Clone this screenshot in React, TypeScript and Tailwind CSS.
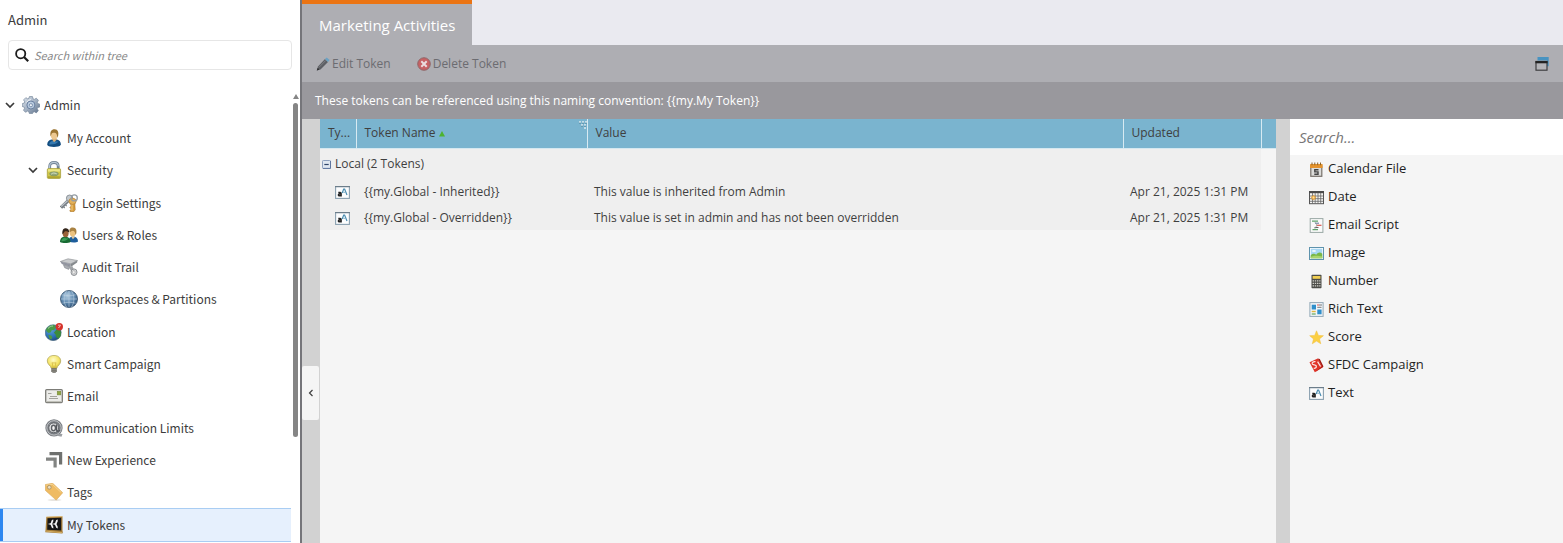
import React, { useState } from 'react';
import clsx from 'clsx';

type IconProps = { className?: string };
type Icon = React.FC<IconProps>;

const GearIcon: Icon = ({ className }) => (
    <svg viewBox="0 0 18 18" className={className} aria-hidden="true">
        <defs>
            <linearGradient id="gear" x1="0" y1="0" x2="1" y2="1">
                <stop offset="0" stopColor="#dfe6ee" />
                <stop offset=".5" stopColor="#a3b1c3" />
                <stop offset="1" stopColor="#5d7089" />
            </linearGradient>
        </defs>
        <path d="M7.4.6h3.1l.5 2.2 1.3.6 2-1.2 2.1 2.1-1.1 2 .5 1.3 2 .6v2.7l-2.1.6-.5 1.2 1.1 2-2 2.2-2-1.2-1.3.6-.5 1.3H7.4l-.6-1.9-1.3-.6-2 1.2-2-2.1 1.1-2-.5-1.2-1.9-.5V7.7l2-.6.5-1.3-1.1-1.9 2.2-2.2 1.9 1.1 1.2-.5z" fill="url(#gear)" stroke="#74859a" strokeWidth=".7" />
        <circle cx="8.9" cy="9" r="4" fill="#b9cbe0" stroke="#6a80a0" strokeWidth="1" />
        <circle cx="8.9" cy="9.2" r="1.6" fill="#eef3f8" stroke="#6a80a0" strokeWidth=".8" />
        <path d="M4.5 6.5A5.2 5.2 0 0 1 9 3.6" fill="none" stroke="#f5f8fb" strokeWidth=".9" />
    </svg>
);

const PersonIcon: Icon = ({ className }) => (
    <svg viewBox="0 0 18 18" className={className} aria-hidden="true">
        <path d="M2.200 16c0-3.400 1.600-5 4.600-5.500l4.400-.2c3.200.8 4.700 2.300 4.700 5.500-1.300 1.900-4 2.100-7 2.100-3 0-5.500-.3-6.700-1.900z" fill="#134d80" />
        <path d="M4 15.500c1-2.500 2-3.500 4.500-3.700 2 .8 3.500 1 5 .2-1 2.700-4.500 3.700-9.500 3.500z" fill="#3579b0" />
        <path d="m7 10.200 2 3 3-2.700-.8-2.200H7.200z" fill="#d9ae78" />
        <ellipse cx="9" cy="6" rx="3.200" ry="4.400" fill="#edc890" />
        <path d="M5.600 7.500C4.500 2.300 6.800.1 9.800.3c3 .3 4.200 2.800 3.300 6.600l-1.100 2c.3-2.300 0-4.300-1.500-5-1-.3-2-.2-3.200.2-1 .6-.7 1.800-1.700 3.400z" fill="#9b7431" />
    </svg>
);

const LockIcon: Icon = ({ className }) => (
    <svg viewBox="0 0 18 18" className={className} aria-hidden="true">
        <path d="M4.700 9V5.200C4.700 2.700 6.500 1.500 9 1.500s4.200 1.300 4.200 3.800V9" fill="none" stroke="#6f8193" strokeWidth="2.800" />
        <path d="M4.600 8.500V5.200C4.600 2.800 6.400 1.400 9 1.400s4.300 1.400 4.300 3.800" fill="none" stroke="#b7c6d4" strokeWidth="1.200" />
        <rect x="2.300" y="7.600" width="13.300" height="9.900" rx="1.200" fill="#cfc748" stroke="#a29a35" strokeWidth=".7" />
        <rect x="3" y="8.200" width="11.900" height="2.400" fill="#ece684" />
        <rect x="3" y="15.300" width="11.900" height="1.700" fill="#aea42f" />
        <ellipse cx="9" cy="12.800" rx="4.400" ry="2" fill="#93a878" stroke="#6e8560" strokeWidth=".5" />
        <path d="M6.200 13.200c1.400-1.500 3.300-1.500 5.500-.4" fill="none" stroke="#e6ecd4" strokeWidth=".8" />
    </svg>
);

const KeysIcon: Icon = ({ className }) => (
    <svg viewBox="0 0 18 18" className={className} aria-hidden="true">
        <path d="M9.500 5.500 1 13.500" stroke="#747b82" strokeWidth="3.200" />
        <path d="M9.500 5 1.200 12.500" stroke="#bac0c6" strokeWidth="1.200" />
        <path d="m3 12 1.700 2M5 10.200l1.600 1.900" stroke="#7c838a" strokeWidth="1.200" />
        <circle cx="9.600" cy="4.200" r="3.200" fill="#c3c8cc" stroke="#868d94" strokeWidth=".9" />
        <path d="m10.200 7.500 4.500.6.500 7.700-1.500 2h-3.200l-.7-1.400 1.500-1.200-1.400-1.700 1.200-1.400z" fill="#d89d3d" stroke="#a36f25" strokeWidth=".6" />
        <path d="M12 8.500v8" stroke="#f4cf83" strokeWidth="1" />
        <ellipse cx="12.500" cy="7.300" rx="3.600" ry="3.100" fill="#e3b058" stroke="#a9752b" strokeWidth=".6" />
        <circle cx="14.300" cy="3.900" r="3" fill="none" stroke="#959da4" strokeWidth="1.300" />
    </svg>
);

const UsersIcon: Icon = ({ className }) => (
    <svg viewBox="0 0 18 18" className={className} aria-hidden="true">
        <path d="M8.500 15.500c.2-3.200 1.700-4.600 4-4.900 3.500 0 5.500 1.600 5.500 4.900-1.800 1.300-5.700 1.500-9.500 0z" fill="#1d5d9b" />
        <path d="m11.200 10.500 1.700 2.800 2.200-2.500z" fill="#e9c898" />
        <ellipse cx="12.600" cy="6.500" rx="3" ry="4" fill="#ecc27f" />
        <path d="M9.600 6.500c-.7-3.800 1-5.200 3.400-5 2.900.2 4 2.500 3.300 6l-1 1.500c.1-2.200-.5-4.100-2.300-4.300-1.500.2-1.900.7-3.400 1.800z" fill="#a98242" />
        <path d="M0 16c0-3.800 2-5.300 4.700-5.600 3.500 0 5.800 2.100 5.800 5.600-2 1.400-8.200 1.500-10.500 0z" fill="#186b33" />
        <path d="M1.300 15.200c.6-2.200 1.700-3.200 3.200-3.400 1.700.8 3 .7 4 .3-.8 2-3.500 3.200-7.200 3.100z" fill="#3b9a57" />
        <ellipse cx="5.600" cy="7.300" rx="3" ry="3.900" fill="#9a6238" />
        <path d="M2.600 8.300C1.800 4.200 3.400 2.100 6 2.300c2.300.2 3.400 1.900 3 4.300-1.200-1.200-2.300-1.500-3.900-1.300-1 .7-1.100 1.400-2.500 3z" fill="#33251b" />
    </svg>
);

const CameraIcon: Icon = ({ className }) => (
    <svg viewBox="0 0 18 18" className={className} aria-hidden="true">
        <path d="M.3 3.500 8 .8l9.500 1.700-6.800 3.400z" fill="#c9cbcd" stroke="#8a8d90" strokeWidth=".6" />
        <path d="m.3 3.500 10.400 2.400-.3 2.800L1.800 6z" fill="#9295a0" />
        <path d="m10.700 5.900 6.800-3.400-.4 1.900-5 3.500-1.700.8z" fill="#85898d" />
        <path d="m3.300 6.600 6.600 2-1.200 2.800-4-1.600z" fill="#a9acb2" stroke="#767a80" strokeWidth=".5" />
        <path d="m8.700 9 3.600-.9 2 4.100-2.700 1.800z" fill="#a0a3a7" />
        <ellipse cx="14" cy="14.200" rx="3" ry="3.300" fill="#d3d5d7" stroke="#85888c" strokeWidth=".9" />
        <ellipse cx="13.800" cy="14.200" rx="1.300" ry="1.700" fill="#f1f1f1" stroke="#999" strokeWidth=".5" />
    </svg>
);

const GlobeIcon: Icon = ({ className }) => (
    <svg viewBox="0 0 18 18" className={className} aria-hidden="true">
        <defs>
            <radialGradient id="globe" cx=".4" cy=".3" r=".75">
                <stop offset="0" stopColor="#b3cce0" />
                <stop offset=".5" stopColor="#6690b5" />
                <stop offset="1" stopColor="#2c5075" />
            </radialGradient>
        </defs>
        <circle cx="9" cy="9" r="8.500" fill="url(#globe)" stroke="#3f5a75" strokeWidth=".9" />
        <path d="M9 .8v16.400M1 9h16M2.500 4.800c4 1.200 9 1.200 13 0M2.500 13.200c4-1.200 9-1.200 13 0M6.500 1C3.300 5.500 3.300 12.500 6.500 17M11.500 1c3.200 4.500 3.200 11.500 0 16" fill="none" stroke="#bdd2e2" strokeWidth=".6" />
    </svg>
);

const LocationIcon: Icon = ({ className }) => (
    <svg viewBox="0 0 18 18" className={className} aria-hidden="true">
        <defs>
            <radialGradient id="earth" cx=".35" cy=".3" r=".8">
                <stop offset="0" stopColor="#5ea3da" />
                <stop offset=".6" stopColor="#2b6fb5" />
                <stop offset="1" stopColor="#1f4070" />
            </radialGradient>
        </defs>
        <circle cx="8.200" cy="9.700" r="8" fill="url(#earth)" stroke="#4d6b7e" strokeWidth=".6" />
        <path d="M1 6.500C3 3 6 1.500 9.500 2l1.700 2.400-2 2.700-2.500.2-.8 2L3.500 10 1.700 8.500z" fill="#4a9a49" />
        <path d="m11.300 6.700 3.200-.5 1.500 2.700-.3 4-2.400 2.900-2.200-1.900-.5-2.500-1.700-1.700z" fill="#3c8c3c" />
        <path d="m3.200 11.700 2.900.9 1.200 1.500-1 2.500-1.800-.9z" fill="#4d9a44" />
        <path d="M3 5.500C4.500 3.800 6 3 8 3" stroke="#a6d19c" fill="none" />
        <circle cx="14.300" cy="3.700" r="3.700" fill="#d5322b" />
        <path d="M13 2.200h2.700M15.500 2.500l-2 2.500" stroke="#f7bdb7" strokeWidth="1" fill="none" />
    </svg>
);

const BulbIcon: Icon = ({ className }) => (
    <svg viewBox="0 0 18 18" className={className} aria-hidden="true">
        <defs>
            <radialGradient id="bulb" cx=".45" cy=".35" r=".7">
                <stop offset="0" stopColor="#fffcc9" />
                <stop offset=".6" stopColor="#f5e466" />
                <stop offset="1" stopColor="#cbb535" />
            </radialGradient>
        </defs>
        <path d="M6.200 13.200C6 10.700 2.300 9.500 2.300 6 2.300 2.600 5.300.4 9 .4s6.700 2.200 6.700 5.600c0 3.500-3.600 4.700-3.800 7.200z" fill="url(#bulb)" stroke="#b3a862" strokeWidth=".8" />
        <path d="m7 7.500 1.200 5M11 7.500l-1.200 5M7 7.500l1 .8 1-.8 1 .8 1-.8" stroke="#cdae35" strokeWidth=".6" fill="none" />
        <path d="M6.300 13.200h5.500v3l-1.300 1.600H7.700l-1.400-1.600z" fill="#64625a" />
        <path d="M6.300 14.700h5.500M6.500 16.200h5" stroke="#b4b2a8" strokeWidth=".6" />
    </svg>
);

const EmailIcon: Icon = ({ className }) => (
    <svg viewBox="0 0 18 18" className={className} aria-hidden="true">
        <rect x=".7" y="2.600" width="16.600" height="13" rx="1" fill="#ecece9" stroke="#7c7c77" strokeWidth="1.300" />
        <path d="M1.500 14.600h15" stroke="#bdbdb6" />
        <rect x="12.200" y="4.300" width="3.600" height="3.600" fill="#8fa63f" stroke="#6f8137" strokeWidth=".5" />
        <path d="M3 6.500h3.500M5 9.500h7M4 11.500h9" stroke="#a2a29c" strokeWidth="1" />
    </svg>
);

const AtIcon: Icon = ({ className }) => (
    <svg viewBox="0 0 18 18" className={className} aria-hidden="true">
        <circle cx="9" cy="8.900" r="8.600" fill="#777b80" />
        <circle cx="9" cy="8.900" r="7.200" fill="none" stroke="#c3c5c8" strokeWidth="1" />
        <circle cx="8.700" cy="8.800" r="4.900" fill="#e2e3e4" stroke="#64676c" strokeWidth="1" />
        <ellipse cx="8.500" cy="9" rx="2" ry="2.700" fill="#f5f5f5" stroke="#5d6065" strokeWidth="1.400" />
        <path d="M11.500 5.500v5.200c.2 1.900 2.300 2.100 3.300.3" fill="none" stroke="#53565b" strokeWidth="1.400" />
        <path d="m12 14.500 5.500.5-1 2.700-4.500-1z" fill="#9b9ea2" />
    </svg>
);

const ExperienceIcon: Icon = ({ className }) => (
    <svg viewBox="0 0 18 18" className={className} aria-hidden="true">
        <path d="M4.500 2.700h11.100v10.800" fill="none" stroke="#6f716f" strokeWidth="3.200" />
        <path d="M1 8.200h9.100v8.300" fill="none" stroke="#828482" strokeWidth="3.200" />
    </svg>
);

const TagIcon: Icon = ({ className }) => (
    <svg viewBox="0 0 18 18" className={className} aria-hidden="true">
        <ellipse cx="9.500" cy="17" rx="7" ry=".8" fill="#dfdcd6" />
        <path d="M.4 1.500 7.700.3l10 9.400-6.500 7.400L.5 7.500z" fill="#efbb63" stroke="#d9a654" strokeWidth=".6" />
        <path d="m1.300 2.300 6-1 9 8.300" fill="none" stroke="#f8d99b" strokeWidth=".8" />
        <circle cx="4.300" cy="4.300" r="1.900" fill="#e9dcc1" stroke="#aa9161" strokeWidth=".9" />
    </svg>
);

const TokensIcon: Icon = ({ className }) => (
    <svg viewBox="0 0 18 18" className={className} aria-hidden="true">
        <path d="M1.300 1 17.500.4v15.300l.5-.2-.5 2.100L.2 16.200l.3-1.600z" fill="#a67c37" />
        <path d="m2.500 2.300 13.700-.5v12.700L2.200 13.700z" fill="#161616" />
        <path d="M1.300 1 17.500.4" stroke="#ddb870" strokeWidth=".8" />
        <path d="M.5 15 17 16.700" stroke="#d9b46a" strokeWidth=".9" />
        <path d="M8.300 4.500c-2 0-.6 2.800-2.600 3.500 2 .6.600 3.500 2.600 3.500M12.700 4.500c-2 0-.6 2.800-2.600 3.500 2 .6.600 3.500 2.600 3.500" fill="none" stroke="#f5f5f5" strokeWidth="1.800" />
    </svg>
);

const CalendarFileIcon: Icon = ({ className }) => (
    <svg viewBox="0 0 15 15" className={className} aria-hidden="true">
        <rect x="1.800" y="4" width="11" height="10.300" fill="#dcdcda" stroke="#77716a" strokeWidth="1.200" />
        <rect x="1" y="2" width="12.600" height="4" rx=".6" fill="#e5932c" />
        <path d="M3 .5v2.700M5.800.5v2.700M8.700.5v2.700M11.500.5v2.700" stroke="#8a6228" strokeWidth="1" />
        <path d="M9.500 7.700H5.800v2.200H9v2.300H5.300" fill="none" stroke="#444" strokeWidth="1.400" />
    </svg>
);

const DateIcon: Icon = ({ className }) => (
    <svg viewBox="0 0 15 15" className={className} aria-hidden="true">
        <rect x=".5" y="1.500" width="14" height="12.200" fill="#f5f5f3" stroke="#555" />
        <rect x="0" y="1" width="15" height="2.200" fill="#4b4b4b" />
        <path d="M1 6h13M1 8.700h13M1 11.300h13M3.500 3v10.500M6.200 3v10.500M9 3v10.500M11.700 3v10.500" stroke="#666" strokeWidth=".8" />
        <path d="m4.500 4.600.6 1.400 1.500-.5-.5 1.500 1.400.6-1.400.6.5 1.500-1.500-.5-.6 1.400-.6-1.400-1.500.5.5-1.500-1.400-.6 1.400-.6-.5-1.500 1.500.5z" fill="#e8a43c" />
        <circle cx="4.500" cy="7.600" r="1" fill="#ffe3a1" />
    </svg>
);

const ScriptIcon: Icon = ({ className }) => (
    <svg viewBox="0 0 15 15" className={className} aria-hidden="true">
        <rect x="1.200" y=".6" width="12.700" height="13.800" fill="#fafafa" stroke="#9aa8a5" strokeWidth="1" />
        <path d="M3 3.200h6M3.500 11.700h5.500" stroke="#5fa56c" strokeWidth="1.200" />
        <path d="M6 5.200h4" stroke="#6b7fa0" strokeWidth="1.100" />
        <path d="M7.500 7.300h5" stroke="#d9564e" strokeWidth="1.200" />
        <path d="M5.500 9.500h4" stroke="#666" strokeWidth="1.100" />
        <path d="M5.500 3.500 8 7.200l-2.500 4" fill="none" stroke="#8b9c93" strokeWidth=".6" />
    </svg>
);

const ImageIcon: Icon = ({ className }) => (
    <svg viewBox="0 0 15 15" className={className} aria-hidden="true">
        <rect x=".5" y="1.500" width="14" height="12" fill="#fff" stroke="#5e93ad" />
        <rect x="1.700" y="2.700" width="11.600" height="9.600" fill="#a9d8f3" />
        <path d="M1.700 9.200c2.500-2 4-1.500 5.500-.4 2-2.800 4-2.700 6.100-1v4.500H1.700z" fill="#79b748" />
        <path d="M1.700 10.700c3-1 6-1.700 11.600-.2v1.800H1.700z" fill="#a9d56c" />
        <ellipse cx="5" cy="5" rx="2" ry="1" fill="#eef9ff" />
    </svg>
);

const NumberIcon: Icon = ({ className }) => (
    <svg viewBox="0 0 15 15" className={className} aria-hidden="true">
        <rect x="2.500" y=".8" width="10" height="13.500" rx=".7" fill="#4c4c48" />
        <rect x="3.600" y="2" width="7.800" height="2.800" fill="#f1cf52" />
        <path d="M3.600 6.900h7.900M3.600 9.400h7.900M3.600 11.900h7.900" stroke="#d0d0ca" strokeWidth="1.300" strokeDasharray="1.400 .8" />
    </svg>
);

const RichTextIcon: Icon = ({ className }) => (
    <svg viewBox="0 0 15 15" className={className} aria-hidden="true">
        <rect x=".9" y=".6" width="13.200" height="13.800" fill="#f2f6f9" stroke="#91a7b5" />
        <rect x="2.700" y="2.700" width="4.300" height="4.800" fill="#2f8ecb" />
        <rect x="8.300" y="7.500" width="4.300" height="4.800" fill="#2f8ecb" />
        <path d="M8 3h2" stroke="#d55" strokeWidth="1" />
        <path d="M10 3h3M8.300 5.300h4.200" stroke="#777" strokeWidth="1" />
        <path d="M2.700 9.500h4" stroke="#e1b73f" strokeWidth="1.400" />
        <path d="M2.700 12h4" stroke="#64a75d" strokeWidth="1.200" />
    </svg>
);

const StarIcon: Icon = ({ className }) => (
    <svg viewBox="0 0 15 15" className={className} aria-hidden="true">
        <path d="m7.500.8 1.900 4.600 5 .3-3.900 3.200 1.300 4.900-4.300-2.700-4.200 2.700 1.200-4.900L.7 5.700l5-.3z" fill="#fbcf43" stroke="#f0bd38" strokeWidth=".5" />
    </svg>
);

const SfdcIcon: Icon = ({ className }) => (
    <svg viewBox="0 0 15 15" className={className} aria-hidden="true">
        <path d="M.5 4.200 8.700.6l5.300 8.700-8.200 5z" fill="#e03327" />
        <path d="m8.700.6 2.100.5 3.700 7.400-8.700 5.800 7.200-5.800z" fill="#a31a12" />
        <path d="M6.500 3.700C4.500 3.200 2.700 4.500 3.300 6c.6 1.300 3.200.5 3.900 1.900.6 1.500-.9 2.700-2.500 2.300M8.600 3.700l3 4.800" fill="none" stroke="#fbe3e0" strokeWidth="1.300" />
    </svg>
);

const TextIcon: Icon = ({ className }) => (
    <svg viewBox="0 0 15 15" className={className} aria-hidden="true">
        <rect x=".6" y="1.600" width="13.800" height="11.800" fill="#fcfdfe" stroke="#8aa0b0" strokeWidth="1.100" />
        <path d="M0 1.600h15" stroke="#6b7c88" strokeWidth="1.100" />
        <path d="M3.300 7.500h1.900c.8 0 .9.500.9 1v2.300H4.500c-1.500 0-1.500-1.700 0-1.700H6" fill="none" stroke="#222" strokeWidth="1.500" />
        <path d="m7.200 8 1.500-4h.9l2.400 6" fill="none" stroke="#4b8cb0" strokeWidth="1.200" />
        <path d="M8.200 7.300h2.500" stroke="#86b3cb" strokeWidth="1" />
    </svg>
);

const PencilIcon: Icon = ({ className }) => (
    <svg viewBox="0 0 14 14" className={className} aria-hidden="true">
        <path d="M.8 13.400 2 9.500l7-7.400 3 2.800-7.500 7.500z" fill="#5d5f64" />
        <path d="m3 10.300 6.800-6.900" stroke="#85878b" strokeWidth=".8" />
        <path d="M9 2.100 10.700.4l3 2.700L12 4.900z" fill="#6ba2c4" />
        <path d="m.8 13.400.9-2.600 1.700 1.700z" fill="#2f2f31" />
    </svg>
);

const DeleteIcon: Icon = ({ className }) => (
    <svg viewBox="0 0 14 14" className={className} aria-hidden="true">
        <circle cx="7" cy="7" r="6.300" fill="#c66163" stroke="#8b6467" strokeWidth=".9" />
        <path d="m4.300 4.300 5.400 5.400M9.700 4.300 4.300 9.700" stroke="#ebdcdd" strokeWidth="2" />
    </svg>
);

const WindowsIcon: Icon = ({ className }) => (
    <svg viewBox="0 0 14 14" className={className} aria-hidden="true">
        <path d="M2.500 0h11.200v9.200H12V3.500H2.500z" fill="#4893c1" />
        <rect x="1" y="4.500" width="11" height="8.700" fill="#b4b4b8" stroke="#3f3f42" strokeWidth="1.200" />
        <path d="M.4 5.200h12.200" stroke="#222" strokeWidth="2.200" />
    </svg>
);

const Chevron: Icon = ({ className }) => (
    <svg viewBox="0 0 10 10" className={className} aria-hidden="true">
        <path d="m1 3 4 4 4-4" fill="none" stroke="#3a3a3a" strokeWidth="1.700" />
    </svg>
);

interface TreeItem {
    label: string;
    Icon: Icon;
    children?: TreeItem[];
}

const TREE: TreeItem[] = [
    {
        label: 'Admin',
        Icon: GearIcon,
        children: [
            { label: 'My Account', Icon: PersonIcon },
            {
                label: 'Security',
                Icon: LockIcon,
                children: [
                    { label: 'Login Settings', Icon: KeysIcon },
                    { label: 'Users & Roles', Icon: UsersIcon },
                    { label: 'Audit Trail', Icon: CameraIcon },
                    { label: 'Workspaces & Partitions', Icon: GlobeIcon },
                ],
            },
            { label: 'Location', Icon: LocationIcon },
            { label: 'Smart Campaign', Icon: BulbIcon },
            { label: 'Email', Icon: EmailIcon },
            { label: 'Communication Limits', Icon: AtIcon },
            { label: 'New Experience', Icon: ExperienceIcon },
            { label: 'Tags', Icon: TagIcon },
            { label: 'My Tokens', Icon: TokensIcon },
        ],
    },
];

const INDENT = ['pl-[5px]', 'pl-7', 'pl-[43px]'];

const TOKEN_TYPES: { label: string; Icon: Icon }[] = [
    { label: 'Calendar File', Icon: CalendarFileIcon },
    { label: 'Date', Icon: DateIcon },
    { label: 'Email Script', Icon: ScriptIcon },
    { label: 'Image', Icon: ImageIcon },
    { label: 'Number', Icon: NumberIcon },
    { label: 'Rich Text', Icon: RichTextIcon },
    { label: 'Score', Icon: StarIcon },
    { label: 'SFDC Campaign', Icon: SfdcIcon },
    { label: 'Text', Icon: TextIcon },
];

const TOKENS = [
    { name: '{{my.Global - Inherited}}', value: 'This value is inherited from Admin', updated: 'Apr 21, 2025 1:31 PM' },
    { name: '{{my.Global - Overridden}}', value: 'This value is set in admin and has not been overridden', updated: 'Apr 21, 2025 1:31 PM' },
];

const TreeNode: React.FC<{ item: TreeItem; level: number; selected: string; onSelect: (label: string) => void }> = ({ item, level, selected, onSelect }) => {
    const [open, setOpen] = useState(true);
    const active = item.label === selected;

    const handleClick = () => {
        if (item.children) setOpen(!open);
        else onSelect(item.label);
    };

    return (
        <li>
            <button
                onClick={handleClick}
                className={clsx('relative flex w-full items-center text-left', INDENT[level], active ? 'h-[34px] border-y border-[#a9cdf3] bg-[#e6f0fd]' : 'h-8')}
            >
                {active && <span className="absolute inset-y-0 left-0 w-[3px] bg-[#2d87f0]" />}
                <span className="mr-[7px] w-2.5 shrink-0">{item.children && <Chevron className={clsx('size-2.5', !open && '-rotate-90')} />}</span>
                <item.Icon className="mr-1 size-[18px] shrink-0" />
                <span>{item.label}</span>
            </button>
            {item.children && open && (
                <ul className={level === 0 ? 'pt-px' : 'py-px'}>
                    {item.children.map(child => <TreeNode key={child.label} item={child} level={level + 1} selected={selected} onSelect={onSelect} />)}
                </ul>
            )}
        </li>
    );
};

const Sidebar: React.FC = () => {
    const [selected, setSelected] = useState('My Tokens');

    return (
        <aside className="flex w-[302px] shrink-0 flex-col border-r-2 border-[#75757a] bg-white font-['Noto_Sans_CJK_SC',sans-serif] text-[12px] leading-5 text-[#3c3c3c]">
            <h1 className="px-2 pt-[10px] text-[13px]">Admin</h1>
            <label className="mx-2 mt-2.5 mb-[19px] flex h-[30px] items-center gap-[5px] rounded-sm border border-[#e6e6e6] px-1.5">
                <svg viewBox="0 0 14 14" className="size-3.5 shrink-0" aria-hidden="true">
                    <circle cx="5.700" cy="5.700" r="4.600" fill="none" stroke="#1c1c1c" strokeWidth="1.800" />
                    <path d="m9 9 4.200 4.200" stroke="#1c1c1c" strokeWidth="2.200" />
                </svg>
                <input type="text" aria-label="Search within tree" placeholder="Search within tree" className="min-w-0 flex-1 text-[11px] italic outline-none placeholder:text-[#8a8a8a]" />
            </label>
            <div className="flex flex-1">
                <nav className="flex-1">
                    <ul>
                        {TREE.map(item => <TreeNode key={item.label} item={item} level={0} selected={selected} onSelect={setSelected} />)}
                    </ul>
                </nav>
                <div className="flex w-[9px] flex-col items-center gap-1 pt-[5px]">
                    <svg viewBox="0 0 6 5" className="h-[5px] w-1.5" aria-hidden="true"><path d="m3 0 3 5H0z" fill="#858585" /></svg>
                    <div className="h-[334px] w-[5px] rounded-full bg-[#858585]" />
                </div>
            </div>
        </aside>
    );
};

const TokenTable: React.FC = () => (
    <table className="w-full table-fixed text-left text-[12px] leading-4 text-[#3f3f3f]">
        <colgroup>
            <col className="w-9" />
            <col className="w-[231px]" />
            <col />
            <col className="w-[138px]" />
            <col className="w-[15px]" />
        </colgroup>
        <thead>
            <tr className="h-[29px] border-b border-[#d5e8f0] bg-[#7ab4cf]">
                <th className="border-r border-[#d8eaf2] pl-2 font-normal">Ty...</th>
                <th className="relative border-r border-[#d8eaf2] pl-2 font-normal">
                    Token Name
                    <svg viewBox="0 0 6 6" className="ml-1 inline size-1.5" aria-hidden="true"><path d="m3 0 3 5.500H0z" fill="#4db330" /></svg>
                    <svg viewBox="0 0 8 8" className="absolute top-0.5 right-0 size-2" aria-hidden="true">
                        <path d="M0 1h8M2 4h6M5 7h3" stroke="#dbeaf1" strokeWidth="1.500" strokeDasharray="2 1" />
                        <path d="M0 2.200h8M2 5.200h6" stroke="#4f8199" strokeWidth=".7" strokeDasharray="2 1" />
                    </svg>
                </th>
                <th className="border-r border-[#d8eaf2] pl-2 font-normal">Value</th>
                <th className="border-r border-[#d8eaf2] pl-2 font-normal">Updated</th>
                <th aria-label="Scroll" />
            </tr>
        </thead>
        <tbody>
            <tr className="h-[30px]">
                <td colSpan={4} className="bg-[#efefef] pt-0.5 pl-0.5">
                    <button className="flex items-center gap-1">
                        <svg viewBox="0 0 9 9" className="size-[9px]" aria-hidden="true">
                            <rect x=".5" y=".5" width="8" height="8" rx=".8" fill="#dfe7f1" stroke="#8fa1bf" />
                            <path d="M1 8.400h7.500V1" fill="none" stroke="#5f769f" />
                            <path d="M2.300 4.500h4.400" stroke="#2f4469" strokeWidth="1.200" />
                        </svg>
                        Local (2 Tokens)
                    </button>
                </td>
                <td />
            </tr>
            {TOKENS.map(token => (
                <tr key={token.name} className="h-[26px]">
                    <td className="bg-[#efefef] pt-0.5 pl-[15px]"><TextIcon className="size-[15px]" /></td>
                    <td className="bg-[#efefef] pt-0.5 pl-2">{token.name}</td>
                    <td className="bg-[#efefef] pt-0.5 pl-[7px]">{token.value}</td>
                    <td className="bg-[#efefef] pt-0.5 pl-[7px] whitespace-nowrap">{token.updated}</td>
                    <td />
                </tr>
            ))}
        </tbody>
    </table>
);

const App: React.FC = () => {
    return (
        <div className="flex h-screen overflow-hidden bg-[#f5f5f5] font-['Open_Sans',sans-serif]">
            <Sidebar />
            <main className="flex min-w-0 flex-1 flex-col">
                <div className="flex h-[45px] bg-[#eaeaf0]">
                    <button className="border-t-4 border-[#eb7413] bg-[#aeaeb3] px-[17px] pt-0.5 text-[15px] text-white">Marketing Activities</button>
                </div>
                <div className="flex h-[37px] items-center bg-[#aeaeb3] px-3.5 text-[12px] text-[#6c6c71]">
                    <button className="mr-[26px] flex items-center gap-0.5"><PencilIcon className="size-3.5" />Edit Token</button>
                    <button className="flex items-center gap-0.5"><DeleteIcon className="size-3.5" />Delete Token</button>
                    <button aria-label="Open in new window" className="ml-auto"><WindowsIcon className="size-3.5" /></button>
                </div>
                <p className="flex h-[37px] items-center bg-[#99989d] px-[13px] text-[12px] text-white">
                    These tokens can be referenced using this naming convention: {'{{my.My Token}}'}
                </p>
                <div className="flex flex-1">
                    <div className="w-[18px] shrink-0 bg-[#d2d2d2] pt-[247px]">
                        <button aria-label="Collapse tree" className="flex h-[54px] w-[17px] items-center justify-center rounded-xs bg-[#f5f5f5]">
                            <svg viewBox="0 0 6 8" className="h-2 w-1.5" aria-hidden="true"><path d="M4.500 1 1.500 4l3 3" fill="none" stroke="#3f3f3f" strokeWidth="1.200" /></svg>
                        </button>
                    </div>
                    <div className="min-w-0 flex-1">
                        <TokenTable />
                    </div>
                    <div className="w-3.5 shrink-0 bg-[#d2d2d2]" />
                    <section className="w-[273px] shrink-0 text-[13px] text-[#1f1f1f]">
                        <input type="text" aria-label="Search" placeholder="Search..." className="block h-9 w-full bg-white px-[9px] text-[15px] italic outline-none placeholder:text-[#777]" />
                        <ul className="pl-[19px]">
                            {TOKEN_TYPES.map(({ label, Icon }) => (
                                <li key={label} className="flex h-7 items-center gap-1"><Icon className="size-[15px]" />{label}</li>
                            ))}
                        </ul>
                    </section>
                </div>
            </main>
        </div>
    );
};

export default App;
